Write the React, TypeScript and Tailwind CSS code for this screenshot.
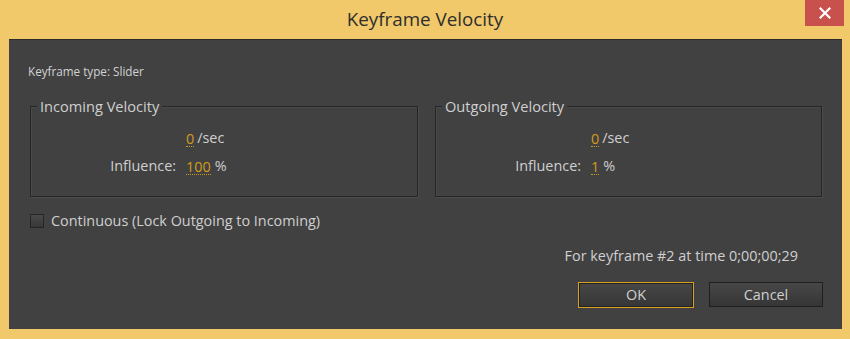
import React from "react";

const font = { fontFamily: '"Open Sans", "Noto Sans", sans-serif' };

function Value({ v }: { v: string }) {
  return (
    <span className="text-[#d29b1e] border-b border-dotted border-[#c99a1e] leading-[15px]">{v}</span>
  );
}

function Group({ title, influence, width }: { title: string; influence: string; width: string }) {
  return (
    <div className={`relative ${width} h-[91px] border border-[#252525] shadow-[1px_1px_0_#4c4c4c,inset_1px_1px_0_#4a4a4a]`}>
      <div className="absolute left-[6px] top-[-10px] bg-[#414141] px-[3px] text-[14.6px] leading-[18px] text-[#cfcfcf]">
        {title}
      </div>
      <div className="grid grid-cols-[145px_auto] gap-x-[10px] pt-[22px] text-[14.4px] leading-[18px] text-[#cfcfcf]">
        <div />
        <div className="flex items-end gap-[3px]">
          <Value v="0" />
          <span>/sec</span>
        </div>
        <div className="text-right mt-[10px]">Influence:</div>
        <div className="flex items-end gap-[4px] mt-[10px]">
          <Value v={influence} />
          <span>%</span>
        </div>
      </div>
    </div>
  );
}

export default function App() {
  return (
    <div style={font} className="w-[850px] h-[339px] bg-[#f1c96b] flex flex-col">
      <div className="relative h-[39px] flex items-center justify-center">
        <span className="text-[18.8px] text-[#2e2e2e] mt-[-1px]">Keyframe Velocity</span>
        <div className="absolute right-[6px] top-0 w-[39px] h-[26px] bg-[#c8514d] flex items-center justify-center">
          <svg width="12" height="12" viewBox="0 0 12 12">
            <path d="M1.5 1.5 L10.5 10.5 M10.5 1.5 L1.5 10.5" stroke="#ffffff" strokeWidth="2.2" strokeLinecap="square" />
          </svg>
        </div>
      </div>
      <div className="ml-[9px] mr-[8px] h-[290px] bg-[#414141] border-t border-[#2b2b2b] flex flex-col">
        <div className="pl-[19px] mt-[24px] text-[11.7px] leading-[14px] text-[#d2d2d2]">Keyframe type: Slider</div>
        <div className="flex gap-[17px] pl-[21px] mt-[28px]">
          <Group title="Incoming Velocity" influence="100" width="w-[388px]" />
          <Group title="Outgoing Velocity" influence="1" width="w-[387px]" />
        </div>
        <div className="flex items-center gap-[7px] pl-[21px] mt-[15px]">
          <div className="w-[14px] h-[14px] border border-[#262626] bg-gradient-to-b from-[#4a4a4a] to-[#383838]" />
          <span className="text-[14.4px] leading-[18px] text-[#cfcfcf]">Continuous (Lock Outgoing to Incoming)</span>
        </div>
        <div className="flex justify-end pr-[44px] mt-[17px] text-[14.4px] leading-[18px] text-[#cfcfcf]">
          For keyframe #2 at time 0;00;00;29
        </div>
        <div className="flex justify-end gap-[15px] pr-[19px] mt-[17px]">
          <button className="w-[116px] h-[26px] border border-[#d9a123] bg-gradient-to-b from-[#474747] to-[#363636] shadow-[inset_0_0_0_1px_#222] text-[14.4px] leading-[18px] text-[#cfcfcf]">
            OK
          </button>
          <button className="w-[114px] h-[25px] border border-[#1f1f1f] bg-gradient-to-b from-[#474747] to-[#363636] text-[14.4px] leading-[18px] text-[#cfcfcf]">
            Cancel
          </button>
        </div>
      </div>
    </div>
  );
}
